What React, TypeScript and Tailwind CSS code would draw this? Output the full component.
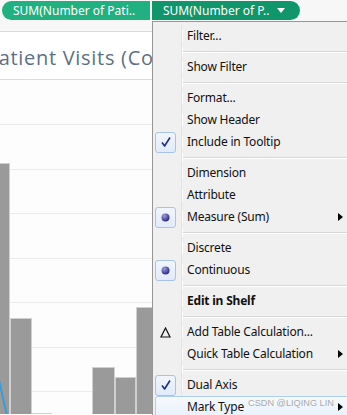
import React from "react";

type Icon = "check" | "radio" | "delta";
type Entry =
  | { kind: "sep" }
  | { kind: "item"; label: string; icon?: Icon; bold?: boolean; sub?: boolean; hover?: boolean };

const MENU: Entry[] = [
  { kind: "item", label: "Filter..." },
  { kind: "sep" },
  { kind: "item", label: "Show Filter" },
  { kind: "sep" },
  { kind: "item", label: "Format..." },
  { kind: "item", label: "Show Header" },
  { kind: "item", label: "Include in Tooltip", icon: "check" },
  { kind: "sep" },
  { kind: "item", label: "Dimension" },
  { kind: "item", label: "Attribute" },
  { kind: "item", label: "Measure (Sum)", icon: "radio", sub: true },
  { kind: "sep" },
  { kind: "item", label: "Discrete" },
  { kind: "item", label: "Continuous", icon: "radio" },
  { kind: "sep" },
  { kind: "item", label: "Edit in Shelf", bold: true },
  { kind: "sep" },
  { kind: "item", label: "Add Table Calculation...", icon: "delta" },
  { kind: "item", label: "Quick Table Calculation", sub: true },
  { kind: "sep" },
  { kind: "item", label: "Dual Axis", icon: "check" },
  { kind: "item", label: "Mark Type", sub: true, hover: true },
];

// chart bars: x, width, top (relative to chart area)
const BARS = [
  { x: -1, w: 11, top: 83 },
  { x: 10, w: 22, top: 238 },
  { x: 32, w: 20, top: 333 },
  { x: 92, w: 23, top: 287 },
  { x: 115, w: 21, top: 297 },
  { x: 136, w: 20, top: 227 },
];
const GRID = [44, 89, 133, 178, 222, 267, 311];

function MenuIcon({ icon }: { icon?: Icon }) {
  if (!icon) return null;
  if (icon === "delta")
    return (
      <div className="flex h-[21px] w-[21px] items-center justify-center">
        <svg width="11" height="11" viewBox="0 0 11 11">
          <polygon points="5.5,1 10,10 1,10" fill="none" stroke="#111" strokeWidth="1.2" />
        </svg>
      </div>
    );
  return (
    <div className="flex h-[21px] w-[21px] items-center justify-center rounded-[3px] border border-[#a8c3ea] bg-gradient-to-b from-[#f1f5fd] to-[#e2ebfb]">
      {icon === "check" ? (
        <svg width="12" height="12" viewBox="0 0 12 12">
          <path d="M2 6.5 L4.6 10 L10 1.5" fill="none" stroke="#1d2d8c" strokeWidth="1.6" strokeLinejoin="round" />
        </svg>
      ) : (
        <svg width="9" height="9" viewBox="0 0 9 9">
          <defs>
            <radialGradient id="rg" cx="35%" cy="30%" r="70%">
              <stop offset="0%" stopColor="#9c9ce0" />
              <stop offset="100%" stopColor="#2d2d82" />
            </radialGradient>
          </defs>
          <circle cx="4.5" cy="4.5" r="4" fill="url(#rg)" />
        </svg>
      )}
    </div>
  );
}

function SubArrow() {
  return (
    <svg width="5" height="8" viewBox="0 0 5 8" className="absolute right-[4px] top-[7px]">
      <polygon points="0,0 5,4 0,8" fill="#000" />
    </svg>
  );
}

function Menu() {
  return (
    <div className="absolute bottom-0 left-[152px] right-0 top-[21px] border-l border-t border-[#979797] bg-[#f0f0f0] pt-[3px] font-['Noto_Sans',sans-serif] text-[12px] tracking-[-0.2px] text-[#111]">
      {MENU.map((e, i) =>
        e.kind === "sep" ? (
          <div key={i} className="flex h-[9px]">
            <div className="w-[29px] border-r border-[#e2e3e3]" />
            <div className="flex-1 border-l border-white pt-[4px]">
              <div className="h-px bg-[#d7d7d7]" />
              <div className="h-px bg-white" />
            </div>
          </div>
        ) : e.hover ? (
          <div key={i} className="relative flex h-[22px] items-center">
            <div className="absolute inset-y-0 left-[2px] right-[-4px] rounded-[3px] border border-[#aecdf4] bg-gradient-to-b from-[#f6f9fe] to-[#e9f1fc]" />
            <div className="relative w-[30px]" />
            <span className="relative pl-[4px] leading-none">{e.label}</span>
            <SubArrow />
          </div>
        ) : (
          <div key={i} className="relative flex h-[22px] items-center">
            <div className="flex h-full w-[29px] items-center border-r border-[#e2e3e3] pl-[2px]">
              <MenuIcon icon={e.icon} />
            </div>
            <span className={`border-l border-white pl-[4px] leading-none ${e.bold ? "font-bold" : ""}`}>{e.label}</span>
            {e.sub && <SubArrow />}
          </div>
        )
      )}
      <div className="pointer-events-none absolute left-[95px] top-[375px] font-['Liberation_Sans',sans-serif] text-[9.2px] tracking-normal text-[#ababab]">
        CSDN @LIQING LIN
      </div>
    </div>
  );
}

function Chart() {
  return (
    <svg width="347" height="334" className="block">
      <rect width="347" height="334" fill="#fdfdfd" />
      {GRID.map((y) => (
        <line key={y} x1="0" x2="347" y1={y + 0.5} y2={y + 0.5} stroke="#ececec" />
      ))}
      {BARS.map((b) => (
        <rect key={b.x} x={b.x + 0.5} y={b.top + 0.5} width={b.w - 1} height={400} fill="#9a9a9a" stroke="#d0d0d0" />
      ))}
      <line x1="-1" y1="300" x2="7" y2="336" stroke="#3a9bd8" strokeWidth="2" />
    </svg>
  );
}

export default function App() {
  return (
    <div className="relative h-[415px] w-[347px] overflow-hidden bg-white">
      <div className="flex h-[21px] items-center bg-[#f7f7f7] pl-[2px] font-['Noto_Sans',sans-serif] text-[12px] text-white">
        <div className="flex h-[19px] w-[148px] items-center rounded-l-[10px] bg-[#21b07f] pl-[11px]">SUM(Number of Pati..</div>
        <div className="ml-[2px] flex h-[19px] w-[148px] items-center rounded-r-[10px] bg-[#11956a] pl-[11px]">
          SUM(Number of P..
          <svg width="8" height="5" viewBox="0 0 8 5" className="ml-[8px]">
            <polygon points="0,0 8,0 4,5" fill="#fff" />
          </svg>
        </div>
      </div>
      <div className="h-[11px] border-b border-[#dadada] bg-[#f7f7f7]" />
      <div className="flex h-[48px] items-center overflow-hidden border-b border-[#dcdcdc] bg-white pt-[5px]">
        <span className="ml-[-14px] whitespace-nowrap font-['Open_Sans',sans-serif] text-[20px] tracking-[0.7px] text-[#5d7083]">
          Patient Visits (Count)
        </span>
      </div>
      <Chart />
      <Menu />
    </div>
  );
}
